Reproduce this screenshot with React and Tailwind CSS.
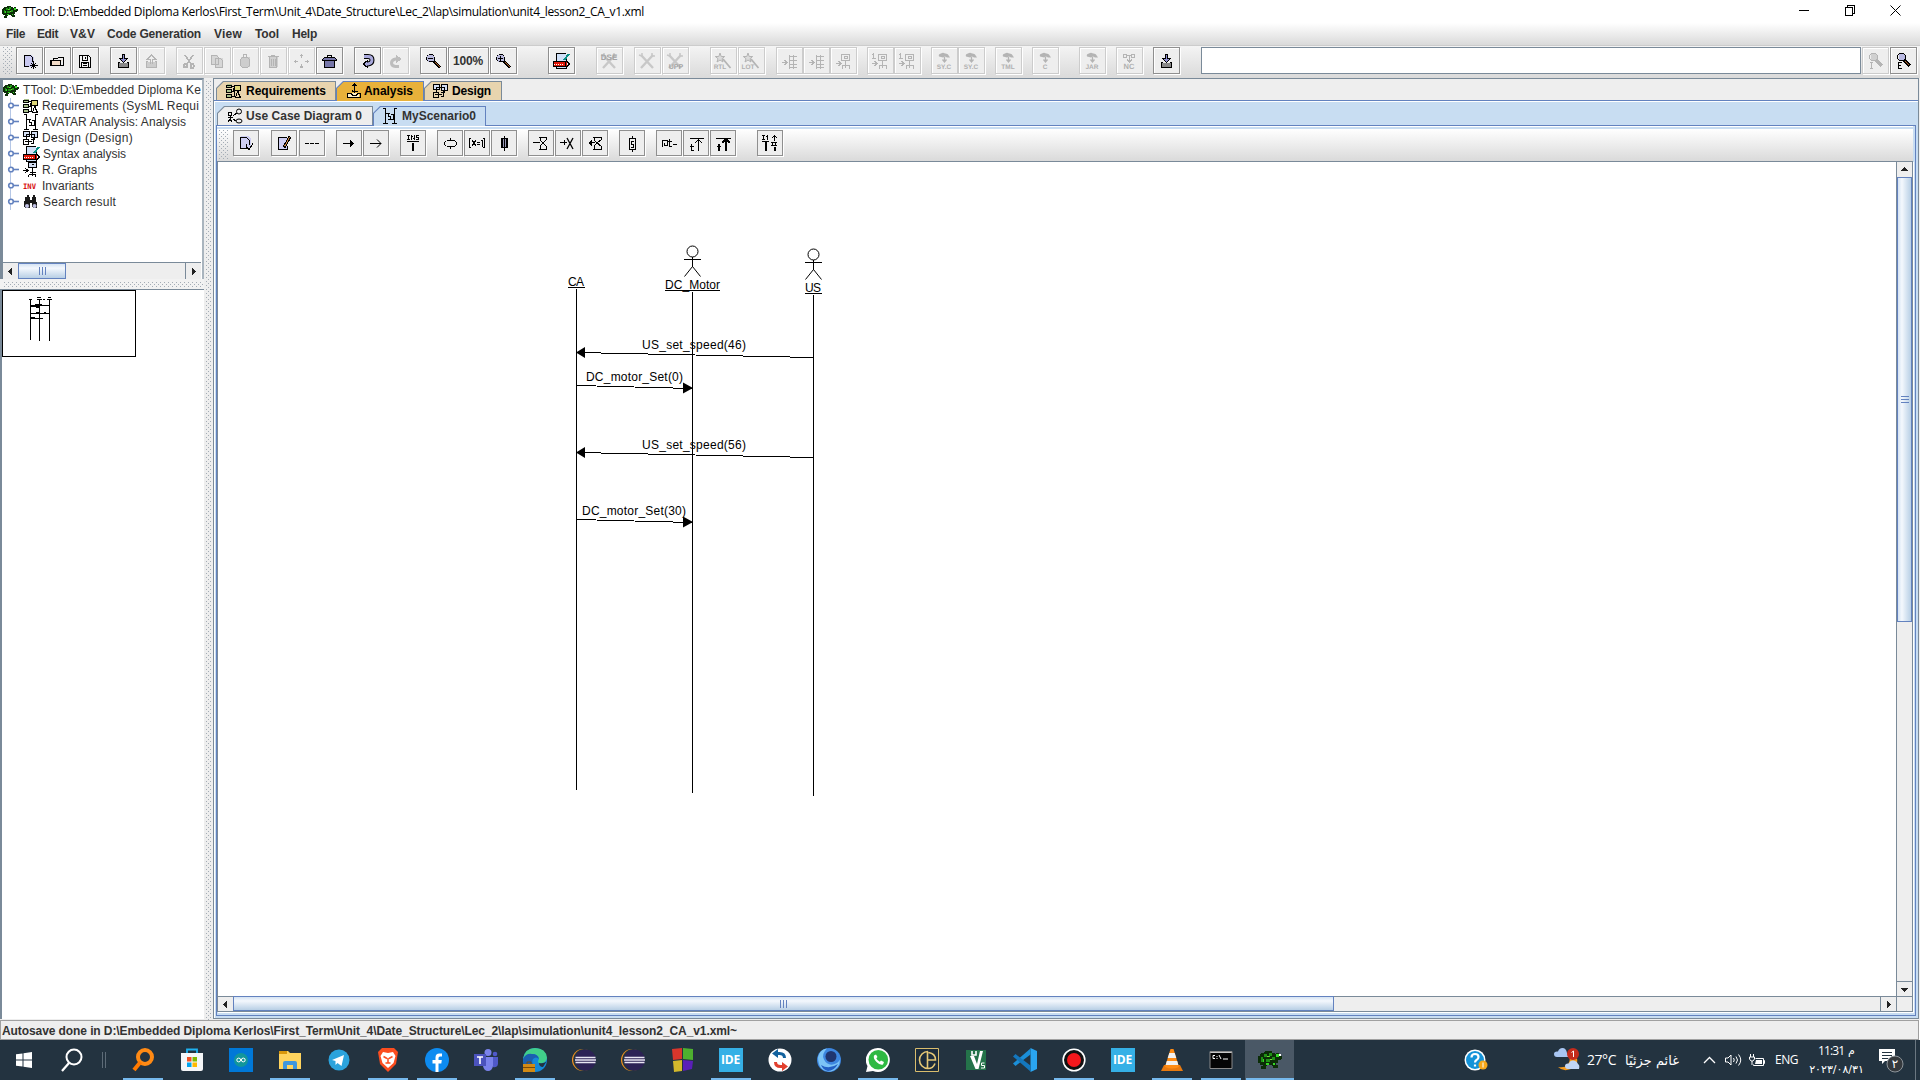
import { useLayoutEffect, useRef } from "react";

/* Text run whose tracking is adjusted so that it fills a given width. */
function Fit({ w, className = "", children, dir }) {
  const ref = useRef(null);
  useLayoutEffect(() => {
    const el = ref.current;
    el.style.letterSpacing = "0px";
    const natural = el.getBoundingClientRect().width;
    const n = String(el.textContent).length;
    el.style.letterSpacing = `${(w - natural) / n}px`;
  }, [w]);
  return (
    <span ref={ref} dir={dir} className={`inline-block whitespace-pre ${className}`}>
      {children}
    </span>
  );
}

const Svg = ({ s = 16, vb = 16, className = "", children }) => (
  <svg width={s} height={s} viewBox={`0 0 ${vb} ${vb}`} className={`shrink-0 ${className}`} fill="none">
    {children}
  </svg>
);

/* One-pixel line drawing on an 18 px grid. */
const Px = ({ d, fill, c = "#000", children, sw = 1 }) => (
  <svg width="18" height="18" viewBox="0 0 18 18" fill="none" shapeRendering="crispEdges" className="shrink-0">
    {fill && fill.map(([p, f], i) => <path key={i} d={p} fill={f} />)}
    {d && <path d={d} stroke={c} strokeWidth={sw} />}
    {children}
  </svg>
);

const Tiny = ({ x, y, children, c = "#b0b0b0", s = 7 }) => (
  <text x={x} y={y} fontSize={s} fontWeight="bold" fontFamily="Liberation Sans, sans-serif" fill={c} textAnchor="middle" textRendering="geometricPrecision">
    {children}
  </text>
);

const Turtle = ({ w = 16 }) => (
  <svg width={w} height={w * 0.75} viewBox="0 0 16 12" shapeRendering="crispEdges" className="shrink-0">
    <path d="M5 0h4v1h2v1h1v-1h2v1h1v1h1v2h-1v1h-2v2h-1v1h1v2h-3v-1h-1v-1h-3v1h-1v2h-3v-2h1v-1h-2v-1h-1v-1h-1v-3h1v-1h1v-1h1v-1h2z" fill="#0b2d07" />
    <path d="M4 2h2v2h-2zM7 1h2v2h-2zM5 5h3v2h-3zM9 4h2v2h-2zM2 4h1v3h-1z" fill="#1f9216" />
    <path d="M12 2h2v2h-2zM3 5h1v2h-1zM5 8h2v1h-2zM10 8h1v1h-1zM7 3h1v1h-1z" fill="#35d924" />
    <path d="M6 3h1v1h-1zM8 5h1v1h-1z" fill="#7bd33a" />
    <path d="M14 2h1v1h-1z" fill="#fff" />
  </svg>
);

const G = "#b4b4b4";

const Lens = ({ plus }) => (
  <Px fill={[["M4 3h5v7h-5zM3 4h7v5h-7z", "#b9b9dd"]]} d={`M4.500 2.500h4M9.500 3v1M10.500 4.500v4M9.500 9.500h-5M3.500 8.500v-1M2.500 7.500v-3M3.500 3v1M4 6.500h5${plus ? "M6.500 4v5" : ""}`}>
    <path d="M10 9.500l6 6" stroke="#000" strokeWidth="3" />
    <path d="M11.500 10.500l4.500 4.500" stroke="#b0622a" strokeWidth="1.200" />
  </Px>
);

const I = {
  new: <Px fill={[["M5 3h6l3 3v9h-9z", "#c9c9f0"]]} d="M4.500 15V3.500h6l2 2v4M5 14.500h4M13.500 9v8M10 13.500h8M11 11l5 5M16 11l-5 5" />,
  open: <Px fill={[["M4 8h10l-2 6h-9z", "#f2dcc8"]]} d="M2.500 13.500V8.500h10v5zM5.500 8V6.500h4l1-1h5v8h-2M3 13.500h11M3 9.500l1 3" />,
  save: <Px fill={[["M4 4h10v11h-10z", "#f4f4f4"]]} d="M3.500 3.500h9l2 2v10h-11zM6.500 4v4h5v-4M9.500 5v2M5.500 15v-5h7v5M7 11.500h4M7 13.500h4" />,
  imp: <Px fill={[["M5 11h9v5h-9z", "#8a8a8a"], ["M8 2h3v5h3l-4.500 4-4.500-4h3z", "#8f8fd0"]]} d="M8.500 6V2.500h2v4h3l-4 4-4-4h3M6 10.500H4.500v5h10v-5H13" />,
  exp: <Px c={G} fill={[["M5 10h9v6h-9z", "#ccc"]]} d="M6 9.500H4.500v6h10v-6H13M8.500 12V7h-3l4-4 4 4h-3v5" />,
  cut: <Px c={G} sw={1.6} d="M5 3l6 9M13 3L7 12M5 12h2v3h-3v-2zM11 12h2l1 2-1 2h-2z" />,
  copy: <Px c={G} fill={[["M4 3h6v9h-6zM8 6h7v9h-7z", "#d6d6d6"]]} d="M3.500 3.500h5l2 2v7h-7zM7.500 6.500h5l2 2v7h-7z" />,
  paste: <Px c={G} fill={[["M5 5h9v10h-9z", "#cdcdcd"]]} d="M4.500 7.500l2-2h5l2 2v6l-2 2h-5l-2-2zM7.500 5V2.500h3V5" />,
  del: <Px c={G} fill={[["M5 5h9v10h-9z", "#d0d0d0"]]} d="M3.500 4.500h11M7 3.500h4M5.500 5v10.500h7V5M7.500 7v7M9.500 7v7M11.500 7v7" />,
  move: <Px c={G} sw={1.4} d="M9.500 2v4M9.500 12v4M2 9.500h4M13 9.500h4M8 3.500h3M8 15h3M3.500 8v3M15.500 8v3" />,
  home: <Px fill={[["M3 6h13v3h-13zM5 9h9v6h-9z", "#7676a8"]]} d="M2.500 7.500l2-2h10l2 2v1h-14zM4.500 9v6.500h10V9M7.500 5V3.500h4V5" />,
  undo: (
    <Px>
      <path d="M6 4.500h4q4 0 4 3.500t-4 4l-1 0" stroke="#000" strokeWidth="5" shapeRendering="auto" />
      <path d="M10 7.500v9l-6-4.500z" fill="#000" />
      <path d="M6 4.500h4q4 0 4 3.500t-4 4l-1 0" stroke="#a9a9dc" strokeWidth="2.800" shapeRendering="auto" />
      <path d="M9 10v4.500l-3-2.500z" fill="#a9a9dc" />
    </Px>
  ),
  redo: (
    <Px>
      <path d="M13 14.500h-3.500q-4-.5-4-3.500t4-4h1" stroke="#bdbdbd" strokeWidth="3" shapeRendering="auto" />
      <path d="M10 2.500v9l5.500-4.500z" fill="#bdbdbd" />
    </Px>
  ),
  zout: <Lens />,
  zin: <Lens plus />,
  syntax: <Px fill={[["M4 2h10v14h-10z", "#cfe0f7"], ["M1 10h14v4h-14z", "#e01808"]]} d="M4.500 10V1.500h9M14.500 6v4M4.500 14v2.500h10V14M1 9.500h14l2 2v1l-2 2H1zM13.500 10v4"><path d="M17 2l-5 6" stroke="#0b8f86" strokeWidth="2" /><path d="M2 12.500h10" stroke="#fff" strokeDasharray="1 1" /></Px>,
  find: (dis, l) => (
    <Px c={dis ? G : "#000"} fill={[["M5 2h6v6h-6z", dis ? "#d0d0d0" : "#b9b9e2"]]} d="M5.500 1.500h4l2 2v3l-2 2h-4l-2-2v-3z">
      <path d="M10 8l6 6" stroke={dis ? G : "#000"} strokeWidth="3" />
      {!dis && <path d="M11 9l4 4" stroke="#b0622a" />}
      <path d={l === "I" ? "M5.500 10v6M4 10.500h3M4 16.500h3" : "M4.500 10v7M4 10.500h4M4 13.500h3M4 16.500h4"} stroke={dis ? G : "#000"} />
    </Px>
  ),
  tools: (t) => (
    <svg width="20" height="20" viewBox="0 0 20 20" fill="none" className="shrink-0">
      <path d="M4 4l12 13M16 4L4 17" stroke="#c8c8c8" strokeWidth="2.400" />
      <path d="M2 4l3 1 0-3M15 2l0 3 3 0" stroke="#c8c8c8" strokeWidth="1.500" />
      {t === "DSE" && <Tiny x={10} y={9} c="#a4a4a4" s={8}>DSE</Tiny>}
      {t === "UPP" && <Tiny x={11} y={18} c="#a4a4a4" s={7}>UPP</Tiny>}
    </svg>
  ),
  wand: (t) => (
    <svg width="20" height="20" viewBox="0 0 20 20" fill="none" className="shrink-0">
      <path d="M7 2l1.200 3.500h3.500l-2.700 2.200 1 3.300-3-2-3 2 1-3.300L2.300 5.500h3.500z" stroke={G} fill="#dcdcdc" />
      <path d="M10 8l7.500 9" stroke={G} strokeWidth="1.800" />
      <Tiny x={7} y={18} s={6.5}>{t}</Tiny>
    </svg>
  ),
  ladder: <Px c={G} sw={1.3} d="M2 10.500h5M4 8l3 2.500L4 13M9.500 3v14M13.500 3v14M9 4.500h8M9 8.500h8M9 12.500h8M9 15.500h8" />,
  rg: <Px c={G} sw={1.3} d="M7.500 2.500h8v6h-8zM10.500 4.500h3v2h-3zM11.500 9v7M2 11.500h5M4 9l3 2.500L4 14M8 13.500h8M8.500 16.500v-3M15.500 16.500v-3" />,
  rg1: <Px c={G} sw={1.3} d="M2.500 1v6M1 2.500h2M1 6.500h4M7.500 2.500h8v6h-8zM10.500 4.500h3v2h-3zM11.500 9v7M1 11.500h5M3 9l3 2.500L3 14M8 13.500h8M8.500 16.500v-3M15.500 16.500v-3" />,
  cloud: (t) => (
    <svg width="20" height="20" viewBox="0 0 20 20" fill="none" className="shrink-0">
      <path d="M5 5.500q-1-2.500 2-3q2-1.500 4 0q3-.5 4 2.500l1 1.500h-3l-2-1-2 1z" fill={G} />
      <path d="M10.500 6v5M8.500 8.500l2 2.500 2-2.500" stroke={G} strokeWidth="1.300" />
      <Tiny x={10} y={18} s={6.5}>{t}</Tiny>
    </svg>
  ),
  nc: (
    <svg width="20" height="20" viewBox="0 0 20 20" fill="none" className="shrink-0" shapeRendering="crispEdges">
      <path d="M4.500 3.500h3v3h-3zM12.500 3.500h3v3h-3zM8 4.500h4M10.500 5v6M8 8.500l2.500 2.500L13 8.500" stroke={G} />
      <Tiny x={10} y={18} s={7.5}>NC</Tiny>
    </svg>
  ),
};

const bar = [
  ["new", I.new, "ml-[3px]"], ["open", I.open, "ml-px"], ["save", I.save, "ml-px"],
  ["import", I.imp, "ml-[11px]"], ["export", I.exp, "ml-px", 1],
  ["cut", I.cut, "ml-[11px]", 1], ["copy", I.copy, "ml-px", 1], ["paste", I.paste, "ml-px", 1], ["delete", I.del, "ml-px", 1], ["move", I.move, "ml-px", 1], ["home", I.home, "ml-px"],
  ["undo", I.undo, "ml-[11px]"], ["redo", I.redo, "ml-px", 1],
  ["zoomout", I.zout, "ml-[11px]"], ["zoom", "100%", "ml-px"], ["zoomin", I.zin, "ml-px"],
  ["syntax", I.syntax, "ml-[31px]"],
  ["dse", I.tools("DSE"), "ml-[21px]", 1],
  ["t1", I.tools(""), "ml-[11px]", 1], ["upp", I.tools("UPP"), "ml-px", 1],
  ["rtl", I.wand("RTL"), "ml-[21px]", 1], ["lot", I.wand("LOT"), "ml-px", 1],
  ["l1", I.ladder, "ml-[11px]", 1], ["l2", I.ladder, "ml-0", 1], ["rg", I.rg, "ml-0", 1],
  ["r1", I.rg1, "ml-[10px]", 1], ["r2", I.rg1, "ml-0", 1],
  ["c1", I.cloud("SY.C"), "ml-[10px]", 1], ["c2", I.cloud("SY.C"), "ml-0", 1],
  ["tml", I.cloud("TML"), "ml-[10px]", 1], ["c", I.cloud("C"), "ml-[10px]", 1],
  ["jar", I.cloud("JAR"), "ml-[20px]", 1], ["nc", I.nc, "ml-[10px]", 1],
  ["imp2", I.imp, "ml-[10px]"],
];

const Btn = ({ cls, dis, children }) => (
  <div className={`${cls} flex h-[27px] shrink-0 items-center justify-center border pt-px pr-px ${dis ? "border-[#cccccc]" : "border-[#8f8f8f]"} bg-[#eeeeee] shadow-[1px_1px_0_#fff,inset_1px_1px_0_#fff]`}>
    {children}
  </div>
);

const bumps =
  "[background:conic-gradient(from_270deg_at_1px_1px,#a4acb5_90deg,transparent_0)_0_0/4px_4px,conic-gradient(from_270deg_at_1px_1px,#a4acb5_90deg,transparent_0)_2px_2px/4px_4px]";

/* Diagram-type icons shared by the tree and the tabs. */
const ReqIcon = () => (
  <Px fill={[["M2 2h5v3h-5zM2 7h5v3h-5zM2 12h5v3h-5z", "#a9c08c"], ["M10 3h5v6h-5z", "#ddd679"]]} d="M1.500 3.500h5v2h-5zM1.500 7.500h5v3h-5zM1.500 12.500h5v3h-5zM9.500 3.500h6v5h-6zM7 4.500h2M7 9.500h2v5h-2M8.500 6v3M10.500 15.500l2-6 3 6zM13 9v2" />
);
const SeqIcon = () => (
  <Px d="M2 1.500h3M13 1.500h3M4.500 2v15M13.500 2v15M2 16.500h5M11 16.500h5M5 6.500h4M9 12.500h4M7.500 6v3h2v3M7 12.500h2M10 7.500h2v4" />
);
const DesIcon = () => (
  <Px fill={[["M2 3h6v5h-6zM10 3h6v5h-6z", "#d3def3"]]} d="M1.500 2.500h6v5h-6zM9.500 2.500h6v6h-6zM1.500 10.500h5v5h-5zM4.500 5v6M5 5.500h7v5h-3M11.500 8v6M3 12.500h7M9 14.500h3" />
);
const AnaIcon = () => (
  <Px fill={[["M3 11h11v4h-11z", "#fff0c4"]]} d="M9.500 1v10M7 3.500h5M8 2.500h3M6.500 9.500h6M7.500 8v2M2.500 15.500v-4h4l1 2h4l1-2h3v4z" />
);
const UcIcon = () => (
  <Px d="M3.500 5.500h3v3h-3zM5.500 9v3M3 10.500h5M3 15l2-3 2 3M8 9l4-3M8 12l3 2"><circle cx="14" cy="4.500" r="2.500" stroke="#000" shapeRendering="auto" /><ellipse cx="14" cy="14" rx="3" ry="2" stroke="#000" shapeRendering="auto" /></Px>
);

const Tab = ({ w, border, bg, icon, text, tw, cls = "", color, pad = "pl-[7px]", gap = "ml-[3px]" }) => (
  <div className={`${w} ${border} ${cls} shrink-0 [clip-path:polygon(7px_0,100%_0,100%_100%,0_100%,0_7px)] pt-px pr-px pl-px`}>
    <div className={`${bg} ${color} ${pad} flex h-[18px] items-center [clip-path:polygon(6.600px_0,100%_0,100%_100%,0_100%,0_6.600px)]`}>
      {icon}
      <Fit w={tw} className={`${gap} text-[12px] leading-none font-bold`}>{text}</Fit>
    </div>
    <div className={`${bg} h-[4px]`} />
  </div>
);

const diag = [
  ["ml-[4px]", <Px key="i" fill={[["M4 2h7l3 3v9h-10z", "#cdcdf2"]]} d="M3.500 3.500h6l3 3v4M3.500 3v11.500h6M9 12.500l3 3 4-6M9.500 10v3" />],
  ["ml-[12px]", <Px key="i" fill={[["M3 3h9v12h-9z", "#cdcdf2"]]} d="M3.500 3.500h8M3.500 3v12.500h9v-4"><path d="M15 2.500l-6 11" stroke="#000" strokeWidth="3" /><path d="M14.500 3.500l-5 9" stroke="#c98544" /></Px>],
  ["ml-[2px]", <Px key="i" d="M2 9.500h4M7 9.500h4M12 9.500h4" />],
  ["ml-[11px]", <Px key="i" fill={[["M10 6h1v1h1v1h1v1h1v1h-1v1h-1v1h-1v1h-1z", "#000"]]} d="M3 9.500h10" />],
  ["ml-[1px]", <Px key="i" d="M3 9.500h11" ><path d="M10 5.500l4 4-4 4" stroke="#000" shapeRendering="auto" /></Px>],
  ["ml-[11px]", <Px key="i" fill={[["M8 9h2v8h-2z", "#000"], ["M3 7h12v1h-12z", "#000"]]} d="M3 1.500h3M3 5.500h3M4.500 1v4M7.500 1v5M10.500 1v5M8 2.500h1M9 4h1M15 1.500h-2.500v2h2v2h-3" />],
  ["ml-[11px]", <Px key="i" d="M5.500 6.500h8M5.500 12.500h8M3.500 8v3M15.500 8v3M4 7.500h1M14 7.500h1M4 11.500h1M14 11.500h1M9.500 4v2M9.500 13v2" />],
  ["ml-[1px]", <Px key="i" d="M3 4.500H1.500v9H3M15 4.500h1.500v9H15M4 6l4 6M8 6l-4 6M9 8.500h3M9 10.500h3M13 6.500h1.500v6" />],
  ["ml-[1px]", <Px key="i" fill={[["M7 5h5v9h-5z", "#9a9ab8"]]} d="M9.500 2v15M7 4.500h5v9h-5z" sw={1.5} />],
  ["ml-[11px]", <Px key="i" d="M1 8.500h7M7 3.500h8M8 4v2l3 3-3 3v3M14 4v2l-3 3 3 3v3M7 15.500h8" />],
  ["ml-[1px]", <Px key="i" d="M1 8.500h7M5 6v5"><path d="M8 4l6 11M14 4L8 15" stroke="#000" strokeWidth="1.300" shapeRendering="auto" /></Px>],
  ["ml-[1px]", <Px key="i" fill={[["M6 5v8l-4-4z", "#000"]]} d="M4 8.500h5M7 3.500h9M8 4v2l3 3-3 3v3M15 4v2l-4 3 4 3v3M7 15.500h9" />],
  ["ml-[11px]", <Px key="i" d="M6.500 4.500h6v11h-6zM9.500 2v2M9.500 16v2M8 7.500h3M8 10.500h3M8 13.500h3M8.500 7v3M10.500 10v3" />],
  ["ml-[11px]", <Px key="i" d="M2.500 13V6.500h5v5h-3v-3M9.500 5v7h2M8 7.500h4M13 10.500h4" />],
  ["ml-[1px]", <Px key="i" d="M3 4.500h14M11.500 5v12M11.500 5.500l-4 4M11.500 5.500l4 4M4.500 10v6h2M3 12.500h4" />],
  ["ml-[1px]", <Px key="i" fill={[["M2 4h15v1h-15zM11 5h2v12h-2zM4 10h2v7h-2zM3 12h4v1h-4z", "#000"]]} d="M12 5l-4 4M12 5l4 4" sw={1.6} />],
  ["ml-[21px]", <Px key="i" fill={[["M4 8h2v9h-2z", "#000"], ["M13 13h2v4h-2z", "#000"]]} d="M1 1.500h3M1 5.500h3M2.500 1v4M6.500 1v5M5 2.500h1M1 7.500h7M13.500 1v6M11 4l2.500-2.500L16 4M10 8.500h6M10 11.500h6M11.500 8v3M14.500 8v3" />],
];

const Arrow = ({ dir }) => (
  <svg width="9" height="9" viewBox="0 0 9 9" shapeRendering="crispEdges">
    <path fill="#222" d={{ l: "M6 0v9L2 4.500z", r: "M3 0v9l4-4.500z", u: "M0 6h9L4.500 2z", d: "M0 3h9L4.500 7z" }[dir]} />
  </svg>
);

const Knob = () => (
  <svg width="16" height="16" viewBox="0 0 16 16" className="shrink-0" fill="none">
    <path d="M7.500 0v16" stroke="#b5c7e6" />
    <circle cx="8" cy="7.500" r="2.300" fill="#fff" stroke="#6382bf" strokeWidth="1.600" />
    <path d="M10.500 7.500h5.500" stroke="#6382bf" strokeWidth="1.600" />
  </svg>
);

const tree = [
  [<ReqIcon key="i" />, "Requirements (SysML Requi", 157, "ml-0"],
  [<SeqIcon key="i" />, "AVATAR Analysis: Analysis", 144, "ml-0"],
  [<DesIcon key="i" />, "Design (Design)", 91, "ml-0"],
  [I.syntax, "Syntax analysis", 83, "ml-px"],
  [<Px key="i" fill={[["M7 2h8v4h-8z", "#d3def3"]]} d="M6.500 1.500h8v5h-8zM9.500 3.500h2M10.500 7v8M1 9.500h5M3 7l3 2.500L3 12M7 13.500h7M6.500 16v-2M13.500 16v-2M8 11.500h6" />, "R. Graphs", 55, "ml-0"],
  [<svg key="i" width="18" height="16" viewBox="0 0 18 16"><text x="1" y="10.500" fontSize="7.500" fontWeight="bold" textLength="13" lengthAdjust="spacingAndGlyphs" fontFamily="DejaVu Sans Mono, monospace" fill="#d81010">INV</text></svg>, "Invariants", 52, "ml-0"],
  [
    <Px key="i" fill={[["M5 2h2v2h1v3h2v-3h1v-2h2v2h1v3l1 3v4l-1 1h-3l-1-1v-4h-2v4l-1 1h-4l-1-1v-4l1-3v-3h2z", "#1a1a1a"]]}>
      <circle cx="5" cy="13" r="2" fill="#c3c3e6" shapeRendering="auto" />
      <circle cx="12.500" cy="13" r="2" fill="#c3c3e6" shapeRendering="auto" />
    </Px>,
    "Search result", 73, "ml-px",
  ],
];

const Person = ({ x, y }) => (
  <g stroke="#000" fill="none">
    <circle cx={x + 0.5} cy={y} r="5.500" />
    <path shapeRendering="crispEdges" d={`M${x + 0.5} ${y + 5}v10M${x - 8} ${y + 8}h17`} />
    <path d={`M${x + 0.5} ${y + 15}l-8 10M${x + 0.5} ${y + 15}l8 10`} />
  </g>
);

/* Sequence diagram; the view box starts at the top-left of the drawing area. */
const Diagram = () => {
  const T = (x, y, w, t) => (
    <text x={x} y={y} textLength={w} fontSize="12" fontFamily="Liberation Sans, sans-serif" fill="#000">{t}</text>
  );
  return (
    <svg width="700" height="680" viewBox="218 162 700 680" className="block">
      <Person x={692} y={251.5} />
      <Person x={813} y={254.5} />
      {T(568, 286, 16, "CA")}
      {T(665, 289, 55, "DC_Motor")}
      {T(805, 292, 16, "US")}
      {T(642, 349, 104, "US_set_speed(46)")}
      {T(586, 381, 97, "DC_motor_Set(0)")}
      {T(642, 449, 104, "US_set_speed(56)")}
      {T(582, 515, 104, "DC_motor_Set(30)")}
      <g stroke="#000" shapeRendering="crispEdges">
        <path d="M568 287.500h17M665 290.500h55M805 293.500h17" />
        <path d="M576.500 289v501M692.500 292v501M813.500 295v501" />
        <path d="M577 352.500L813 357.500M577 385.500L692 388.500M577 452.500L813 457.500M577 519.500L692 522.500" />
      </g>
      <path d="M576 352.500l9-5.500v11zM693 388l-10-5.500v11zM576 452.500l9-5.500v11zM693 522l-10-5.500v11z" fill="#000" />
    </svg>
  );
};

const thumbH = "bg-linear-to-b from-[#d5e3f3] via-[#f4f8fd] via-30% to-[#b8cfe5]";
const thumbV = "bg-linear-to-r from-[#d5e3f3] via-[#f4f8fd] via-30% to-[#b8cfe5]";

const Eclipse = () => (
  <Svg s={24} vb={24}>
    <circle cx="11" cy="12" r="11" fill="#f7941e" />
    <circle cx="12.200" cy="12" r="11" fill="#233340" />
    <circle cx="13.500" cy="12" r="10.500" fill="#2c2255" />
    <path d="M3.500 9.500h20M3 12h21M3.500 14.500h20" stroke="#e8e6f2" strokeWidth="1.500" />
  </Svg>
);
const Ide = () => (
  <div className="flex size-6 items-center justify-center bg-[#35b0e6] text-white"><Fit w={19} className="font-['Open_Sans',sans-serif] text-[12px] font-bold">IDE</Fit></div>
);

const tasks = [
  ["everything", <Svg key="i" s={24} vb={24}><circle cx="14" cy="9" r="7" stroke="#ff8a14" strokeWidth="4" /><path d="M9.500 14L3 22" stroke="#ff7a00" strokeWidth="4" /></Svg>, 1],
  ["store", <Svg key="i" s={24} vb={24}><path d="M7 6V1.500h10V6" stroke="#1fb2f0" strokeWidth="1.800" /><path d="M1 5h22v16q0 2-2 2H3q-2 0-2-2z" fill="#f4f6f8" /><path d="M7 9h4.500v4.500H7z" fill="#f25022" /><path d="M12.500 9H17v4.500h-4.500z" fill="#7fba00" /><path d="M7 14.500h4.500V19H7z" fill="#00a4ef" /><path d="M12.500 14.500H17V19h-4.500z" fill="#ffb900" /></Svg>],
  ["arduino", <Svg key="i" s={24} vb={24}><path d="M0 0h24v24H0z" fill="#0078d7" /><circle cx="12" cy="12" r="7" fill="#12969b" /><circle cx="9.700" cy="12" r="1.900" stroke="#fff" /><circle cx="14.300" cy="12" r="1.900" stroke="#fff" /></Svg>],
  ["files", <Svg key="i" s={24} vb={24}><path d="M1 3h9l2 2h11v16H1z" fill="#ffd45e" /><path d="M1 3h8v3H1z" fill="#d9980c" /><path d="M5 21v-6q0-2 2-2h10q2 0 2 2v6h-4v-4H9v4z" fill="#3f97dd" /></Svg>, 1],
  ["telegram", <Svg key="i" s={24} vb={24}><circle cx="12" cy="12" r="10.500" fill="#2ba3dc" /><path d="M5 12l12-5-2.500 11-4-3-2 2v-4z" fill="#fff" /></Svg>],
  ["brave", <Svg key="i" s={24} vb={24}><path d="M6 0h12l4 4-2 12-8 8-8-8L2 4z" fill="#fb4d1f" /><path d="M7 4l5 1 5-1 2.500 4-2 7-5.500 5-5.500-5-2-7z" fill="#fff" /><path d="M7.500 8.500l3.500 2M16.500 8.500l-3.500 2M12 10v5M9.500 15h5" stroke="#fb4d1f" strokeWidth="1.500" /></Svg>, 1],
  ["facebook", <Svg key="i" s={24} vb={24}><circle cx="12" cy="12" r="12" fill="#0d8bf0" /><path d="M10.500 24v-8.500H7.500V12h3V9.500q0-4 4-4h2.500v3h-2q-1.500 0-1.500 1.500v2h3.300l-.5 3.500H13.500V24z" fill="#fff" /></Svg>, 1],
  ["teams", <Svg key="i" s={24} vb={24}><circle cx="14" cy="4.500" r="3.500" fill="#7b83eb" /><circle cx="21" cy="6" r="2.300" fill="#5059c9" /><path d="M9 9h10v9q-1 5-5 5t-5-5z" fill="#7b83eb" /><path d="M19 9h5v7q-1 4-5 3z" fill="#5059c9" /><path d="M0 6h12v12H0z" fill="#4b53bc" /><path d="M3 9h6M6 9v7" stroke="#fff" strokeWidth="1.600" /></Svg>],
  ["edge", <Svg key="i" s={24} vb={24}><circle cx="12" cy="12" r="12" fill="#1689d8" /><path d="M0 11Q2 0 12 0q11 0 12 10-1 6-8 5-2-1 0-4-1-5-7-5-6 0-9 5z" fill="#41cf8a" /><path d="M0 11q3-6 9-5 6 0 7 5-3-3-6 0-2 3 1 8L3 20q-3-4-3-9z" fill="#1b5fb0" /><path d="M16 15q5 1 7.500-1.500L20 19q-4 0-4-4z" fill="#233340" /><path d="M0 16h12v8H0z" fill="#d28a14" /><path d="M0 19.500h12M4 16v-2h4v2" stroke="#7a4a08" /></Svg>, 1],
  ["ecl1", <Eclipse key="i" />],
  ["ecl2", <Eclipse key="i" />],
  ["blocks", <Svg key="i" s={24} vb={24}><path d="M2 1l10-1v11l-9 1z" fill="#d8362c" /><path d="M13 0l10 1v11l-10-1z" fill="#4db02f" /><path d="M3 13l9-1v11l-8 1z" fill="#d3b92c" /><path d="M13 12l10 1-1 8-9 2z" fill="#5a1fb8" /></Svg>],
  ["ide1", <Ide key="i" />, 1],
  ["sync", <Svg key="i" s={24} vb={24}><circle cx="12" cy="12" r="11.500" fill="#fff" /><path d="M16.500 10q0-4.500-5-4.500H9" stroke="#12629e" strokeWidth="3" /><path d="M10 1v9L4 5.500z" fill="#12629e" /><path d="M7.500 14q0 4.500 5 4.500H15" stroke="#e2402e" strokeWidth="3" /><path d="M14 14v9l6-4.500z" fill="#e2402e" /></Svg>],
  ["wave", <Svg key="i" s={24} vb={24}><circle cx="12" cy="12" r="12" fill="#3d86e0" /><path d="M1 9Q3 1 10 0.500q-6 6-3 11 3 6 9 5 5-1 7-5 0 9-9 12Q1 24 1 9z" fill="#7cc4f6" /><path d="M4 17q8 5 17-1-4 7-10 7-5-1-7-6z" fill="#2360c4" /><circle cx="14" cy="8.500" r="5.500" fill="#20356f" /></Svg>],
  ["whatsapp", <Svg key="i" s={24} vb={24}><path d="M12 0a12 12 0 1 1-5 23L0 24l1.500-6A12 12 0 0 1 12 0z" fill="#fff" /><circle cx="12.300" cy="11.800" r="9.800" fill="#2fb943" /><path d="M8 7.500q-1 3 2.500 6.500t6.500 2.500l1-2.500-3-1.500-1.200 1.200q-2.500-1-3.500-3.500L11.500 9 10 6.500z" fill="#fff" /></Svg>, 1],
  ["ce", <Svg key="i" s={24} vb={24}><path d="M.5.500h23v23H.5z" stroke="#d9bd6d" fill="#1c2c3a" /><path d="M13 3.500a8.500 8.500 0 1 0 0 17M12.500 3.500v17M12.500 12h8q0-6.500-7-7.500M20 15.500q-2 5-7 5" stroke="#e5c876" strokeWidth="1.600" /></Svg>],
  ["keil", <Svg key="i" s={24} vb={24}><path d="M2 2h20v20H2z" fill="#24734a" /><path d="M8 3v4h4V3" stroke="#fff" strokeWidth="1.600" /><path d="M6 8h4l3 8 3-13h3l-4.500 18h-3z" fill="#fff" /><path d="M20.500 15h-3v2.500h3V20h-3.500" stroke="#fff" /></Svg>],
  ["vscode", <Svg key="i" s={24} vb={24}><path d="M17.500 0L24 3v18l-6.500 3z" fill="#2aa5f0" /><path d="M17.500 6.500v-6L0 15.500 2.500 18z" fill="#1b8fd8" /><path d="M17.500 17.500v6L0 8.500 2.500 6z" fill="#1477bd" /></Svg>],
  ["rec", <Svg key="i" s={24} vb={24}><circle cx="12" cy="12" r="10.800" fill="#111" stroke="#fff" strokeWidth="1.600" /><circle cx="12" cy="12" r="7" fill="#f5181c" /></Svg>, 1],
  ["ide2", <Ide key="i" />],
  ["vlc", <Svg key="i" s={24} vb={24}><path d="M4 17h16l3 6H1z" fill="#e87a10" /><path d="M10.500 1h3L19 19q-7 3-14 0z" fill="#ff8c14" /><path d="M9.300 5h5.400l1.600 5H7.700zM6.800 13h10.400l1.200 4H5.600z" fill="#f1f1f1" /></Svg>, 1],
  ["cmd", <Svg key="i" s={24} vb={24}><path d="M1 3h22v18H1z" fill="#050505" /><path d="M1 3h22v2H1z" fill="#c8c8c8" /><path d="M1 3.500h22v17H1z" stroke="#8a8a8a" /><path d="M6 7.500H4v3h2M8 8v1M8 10v1M10 7l2 4M14 11h5" stroke="#fff" /></Svg>, 1],
  ["ttool", <Turtle key="i" w={24} />, 2],
];

export default function App() {
  return (
    <div className="flex h-[1080px] w-[1920px] flex-col overflow-hidden bg-white font-['Liberation_Sans',Arial,sans-serif] text-[12px] text-[#333]">
      {/* Title bar */}
      <div className="flex h-[23px] shrink-0 items-center pl-[2px] text-black">
        <Turtle />
        <Fit w={621} className="ml-[5px] font-['Open_Sans','Noto_Sans',sans-serif] text-[12px] leading-none">
          {"TTool: D:\\Embedded Diploma Kerlos\\First_Term\\Unit_4\\Date_Structure\\Lec_2\\lap\\simulation\\unit4_lesson2_CA_v1.xml"}
        </Fit>
        <div className="ml-auto flex w-[121px] items-center justify-between pr-[19px] pb-[3px]">
          <svg width="11" height="11" shapeRendering="crispEdges"><path d="M0 5.500h10" stroke="#000" /></svg>
          <svg width="11" height="11" fill="none" shapeRendering="crispEdges"><path d="M.5 2.500h7v8h-7zM2.500 2V.5h7v8H8" stroke="#000" /></svg>
          <svg width="11" height="11"><path d="M.5.500l10 10M10.500.500l-10 10" stroke="#000" /></svg>
        </div>
      </div>
      {/* Menu bar */}
      <div className="flex h-[22px] shrink-0 items-center bg-linear-to-b from-white to-[#dadada] pl-[6px] font-bold leading-none">
        <Fit w={19}>File</Fit>
        <Fit w={21} className="ml-[12px]">Edit</Fit>
        <Fit w={25} className="ml-[12px]">{"V&V"}</Fit>
        <Fit w={94} className="ml-[12px]">Code Generation</Fit>
        <Fit w={28} className="ml-[13px]">View</Fit>
        <Fit w={24} className="ml-[13px]">Tool</Fit>
        <Fit w={25} className="ml-[13px]">Help</Fit>
      </div>
      {/* Main toolbar */}
      <div className="flex h-[33px] shrink-0 border-t border-[#cccccc] bg-linear-to-b from-[#f4f4f4] to-[#dadada] pt-px">
        <div className={`ml-[3px] h-[28px] w-[10px] ${bumps}`} />
        {bar.map(([k, icon, ml, dis]) => (
          <Btn key={k} dis={dis} cls={`${ml} ${k === "zoom" ? "w-[41px]" : "w-[27px]"}`}>
            {k === "zoom" ? <Fit w={30} className="font-bold">100%</Fit> : icon}
          </Btn>
        ))}
        <div className="ml-[21px] h-[27px] w-[660px] border border-[#7a8a99] bg-white" />
        <Btn dis cls="ml-px w-[27px]">{I.find(true, "I")}</Btn>
        <Btn cls="ml-px w-[27px]">{I.find(false, "E")}</Btn>
      </div>

      {/* Work area */}
      <div className="flex h-[942px] shrink-0 bg-[#eeeeee]">
        {/* Left column */}
        <div className="flex w-[204px] shrink-0 flex-col">
          <div className="h-[201px] overflow-hidden border-t-2 border-r-2 border-l-[3px] border-[#7a8a99] border-r-[#a9b4be] bg-white">
            <div className="flex h-[183px] w-[198px] flex-col border-b border-[#7a8a99] pt-[2px] leading-none">
              <div className="flex h-[16px] items-center">
                <Turtle />
                <Fit w={178} className="ml-[4px]">{"TTool: D:\\Embedded Diploma Ke"}</Fit>
              </div>
              {tree.map(([icon, t, w, ml]) => (
                <div key={t} className="flex h-[16px] items-center">
                  <Knob />
                  <div className="ml-[3px] flex w-[20px] shrink-0">{icon}</div>
                  <Fit w={w} className={ml}>{t}</Fit>
                </div>
              ))}
            </div>
            <div className="flex h-[16px] w-[198px] bg-[#eeeeee]">
              <div className="flex w-[15px] items-center justify-center"><Arrow dir="l" /></div>
              <div className={`${thumbH} flex w-[48px] items-center justify-center gap-[2px] border border-[#6382bf]`}>
                <i className="h-[8px] w-px bg-[#6382bf]" /><i className="h-[8px] w-px bg-[#6382bf]" /><i className="h-[8px] w-px bg-[#6382bf]" />
              </div>
              <div className="ml-auto flex w-[16px] items-center justify-center border-l border-[#7a8a99] pr-px"><Arrow dir="r" /></div>
            </div>
          </div>
          <div className="flex h-[10px] items-center bg-[#f2f2f2] pl-[4px]"><div className={`h-[5px] w-full ${bumps}`} /></div>
          <div className="h-[730px] border-t border-l-2 border-[#7a8a99] bg-white">
            <div className="h-[67px] w-[134px] border border-black">
              <svg width="132" height="65" viewBox="3 291 132 65" shapeRendering="crispEdges" fill="none" stroke="#000">
                <path d="M30.500 299v41M39.500 300v41M49.500 300v41M30 305.500h20M31 313.500h19M31 318.500h8" />
                <path d="M29 299.500h3M37 299.500h5M47 299.500h5M48 297.500h3M37 297.500h4M43 299.500h2M31 306.500h8M35 304.500h7M36 307.500h4M31 317.500h4M39 318.500h4M36 312.500h4M44 312.500h2" />
              </svg>
            </div>
          </div>
        </div>
        {/* Split divider */}
        <div className="flex w-[9px] shrink-0 justify-center pt-[3px]"><div className={`h-full w-[5px] ${bumps}`} /></div>
        {/* Right column */}
        <div className="mb-px flex w-[1706px] shrink-0 flex-col border border-[#7a8a99]">
          <div className="flex h-[22px] shrink-0 border-b border-[#6382bf] pt-[2px] pl-[2px]">
            <Tab w="w-[120px]" border="bg-[#7a8a99]" bg="bg-[#e8d4ae]" color="text-black" icon={<ReqIcon />} text="Requirements" tw={80} pad="pl-[8px]" />
            <Tab w="w-[88px]" border="bg-[#6382bf]" bg="bg-[#e8b13a]" color="text-black" cls="h-[20px]" icon={<AnaIcon />} text="Analysis" tw={49} pad="pl-[8px]" gap="ml-px" />
            <Tab w="w-[78px]" border="bg-[#7a8a99]" bg="bg-[#e8d4ae]" color="text-black" icon={<DesIcon />} text="Design" tw={39} gap="ml-[2px]" />
          </div>
          <div className="flex min-h-0 grow flex-col border-t border-l border-white bg-[#c8ddf2] pt-[4px] pr-[2px] pb-[2px] pl-px">
            <div className="flex h-[20px] shrink-0 border-b border-[#6382bf] pl-[1px]">
              <Tab w="w-[156px]" border="bg-[#7a8a99]" bg="bg-[#eeeeee]" color="text-[#333]" icon={<UcIcon />} text="Use Case Diagram 0" tw={116} />
              <Tab w="w-[113px]" border="bg-[#6382bf]" bg="bg-[#c8ddf2]" color="text-[#333]" cls="h-[20px]" icon={<SeqIcon />} text="MyScenario0" tw={74} />
            </div>
            <div className="flex min-h-0 grow flex-col border-r border-b border-l border-[#6382bf] pr-[2px] pb-[3px]">
              <div className="h-px shrink-0 bg-white" />
              <div className="h-[2px] shrink-0" />
              <div className="flex h-[32px] shrink-0 bg-linear-to-b from-white to-[#dadada] pt-px">
                <div className={`ml-[2px] h-[29px] w-[10px] shrink-0 ${bumps}`} />
                {diag.map(([ml, icon], i) => (
                  <div key={i} className={`${ml} flex size-[26px] shrink-0 items-center justify-center border border-[#8f8f8f] bg-[#eeeeee] shadow-[1px_1px_0_#fff]`}>{icon}</div>
                ))}
              </div>
              <div className="flex min-h-0 grow flex-col border border-[#7a8a99] bg-white shadow-[1px_1px_0_#fff]">
                <div className="flex min-h-0 grow">
                  <div className="min-h-0 grow overflow-hidden bg-white"><Diagram /></div>
                  <div className="flex w-[16px] shrink-0 flex-col border-l border-[#7a8a99] bg-[#eeeeee]">
                    <div className="flex h-[15px] shrink-0 items-center justify-center"><Arrow dir="u" /></div>
                    <div className={`${thumbV} flex h-[445px] flex-col items-center justify-center gap-[2px] border border-[#6382bf]`}>
                      <i className="h-px w-[8px] bg-[#6382bf]" /><i className="h-px w-[8px] bg-[#6382bf]" /><i className="h-px w-[8px] bg-[#6382bf]" />
                    </div>
                    <div className="mt-auto flex h-[15px] items-center justify-center border-t border-[#7a8a99]"><Arrow dir="d" /></div>
                  </div>
                </div>
                <div className="flex h-[15px] shrink-0 border-t border-[#7a8a99] bg-[#eeeeee]">
                  <div className="flex w-[15px] items-center justify-center"><Arrow dir="l" /></div>
                  <div className={`${thumbH} -mt-px flex w-[1101px] items-center justify-center gap-[2px] border border-[#6382bf]`}>
                    <i className="h-[8px] w-px bg-[#6382bf]" /><i className="h-[8px] w-px bg-[#6382bf]" /><i className="h-[8px] w-px bg-[#6382bf]" />
                  </div>
                  <div className="ml-auto flex w-[16px] items-center justify-center border-l border-[#7a8a99]"><Arrow dir="r" /></div>
                  <div className="w-[16px] border-l border-[#7a8a99]" />
                </div>
              </div>
            </div>
          </div>
        </div>
      </div>

      {/* Status line */}
      <div className="flex h-[20px] w-[1919px] shrink-0 items-center border border-[#a0a0a0] bg-[#eeeeee] pt-[2px] pl-px font-bold leading-none">
        <Fit w={735}>{"Autosave done in D:\\Embedded Diploma Kerlos\\First_Term\\Unit_4\\Date_Structure\\Lec_2\\lap\\simulation\\unit4_lesson2_CA_v1.xml~"}</Fit>
      </div>

      {/* Taskbar */}
      <div className="flex h-[40px] shrink-0 bg-[#233340] font-['Open_Sans','Noto_Sans',sans-serif] text-white">
        <div className="flex w-[48px] items-center justify-center">
          <svg width="16" height="16" fill="#fff"><path d="M0 2.300l6.500-.9v6.100H0zM7.500 1.200L16 0v7.500H7.500zM0 8.500h6.500v6.100L0 13.700zM7.500 8.500H16V16l-8.500-1.200z" /></svg>
        </div>
        <div className="flex w-[48px] items-center justify-center">
          <Svg s={24} vb={24}><circle cx="14" cy="9" r="7.500" stroke="#fff" strokeWidth="2" /><path d="M9 15L2 23" stroke="#fff" strokeWidth="2.200" /></Svg>
        </div>
        <div className="flex w-[22px] items-center pl-[6px]"><div className="h-[16px] w-[4px] border-x border-[#5d6b77]" /></div>
        {tasks.map(([k, icon, on]) => (
          <div key={k} className={`flex h-[40px] w-[49px] shrink-0 flex-col items-center ${on === 2 ? "bg-[#4a5866]" : ""}`}>
            <div className="flex h-[38px] shrink-0 items-center pt-[2px]">{icon}</div>
            {on && <div className={`h-[2px] bg-[#76b9ed] ${on === 2 ? "w-[48px]" : "w-[40px]"}`} />}
          </div>
        ))}
        <div className="ml-auto flex items-center">
          <Svg s={24} vb={24}><circle cx="11" cy="12" r="10.500" fill="#fff" /><circle cx="11" cy="12" r="9" fill="#1593d8" /><path d="M7.500 9.500q0-3.500 3.500-3.500t3.500 3q0 2-2 3-1.500.8-1.500 2.500M11 16.500v2" stroke="#fff" strokeWidth="2.200" /><circle cx="19" cy="17" r="4.500" fill="#f7a81b" /><path d="M19 14.500v5" stroke="#fff" /></Svg>
          <svg width="26" height="24" viewBox="0 0 26 24" className="ml-[66px]" fill="none">
            <path d="M22 7q4 10-5 14-8 3-13-2 12 2 12-10z" fill="#f59a1c" />
            <path d="M3 9q-3 0-3-3t4-2.500Q5 0 8.500 0T13 5q2 1 1 4z" fill="#a9c6f2" />
            <path d="M14 21q-3 0-3-3t4-2.500q1-3.500 4.500-3T24 16q2 1 1 5z" fill="#c0d6f7" />
            <circle cx="19" cy="6" r="6" fill="#c42b1c" /><path d="M17.500 4.500L19.500 3v6" stroke="#fff" />
          </svg>
          <Fit w={29} className="ml-[7px] text-[14px] leading-none">27°C</Fit>
          <span dir="rtl" className="ml-[9px] w-[54px] text-center font-['DejaVu_Sans',sans-serif] text-[13px] leading-none whitespace-nowrap">غائم جزئيًا</span>
          <svg width="13" height="8" className="ml-[24px]" fill="none"><path d="M1 7l5.500-5.500L12 7" stroke="#fff" strokeWidth="1.300" /></svg>
          <svg width="17" height="14" viewBox="0 0 17 14" className="ml-[9px]" fill="none" stroke="#fff"><path d="M.5 5h2.500l3-3v10L3 9H.5zM8.500 5q1.500 2 0 4M11 3.500q3 3.500 0 7M13.500 1.500q4.500 5.500 0 11" /></svg>
          <svg width="17" height="13" viewBox="0 0 17 13" className="ml-[7px]" fill="none" stroke="#fff"><path d="M4.500 10.500v1h10v-7h-8M14.500 6.500h1v3h-1M1.500 0v3M4.500 0v3M.5 3h5v2l-1.500 2h-2L.5 5zM3 7v4" /><path d="M7 6h6v4H6z" fill="#fff" stroke="none" /></svg>
          <Fit w={23} className="ml-[9px] text-[12px] leading-none">ENG</Fit>
          <div className="ml-[10px] flex h-[40px] w-[57px] flex-col items-center justify-center gap-[4px] text-[12px] leading-[15px]">
            <div className="flex gap-[4px]"><Fit w={26}>11:31</Fit><span dir="rtl" className="font-['DejaVu_Sans',sans-serif] text-[11px]">م</span></div>
            <span dir="ltr" className="font-['DejaVu_Sans',sans-serif] text-[11px] tracking-[-0.5px] whitespace-nowrap [direction:ltr] [unicode-bidi:bidi-override]">٢٠٢٣/٠٨/٣١</span>
          </div>
          <svg width="28" height="26" viewBox="0 0 28 26" className="ml-[13px]" fill="none">
            <path d="M1 2h16v12H7l-3 3v-3H1z" fill="#fff" /><path d="M4 5.500h10M4 8.500h10M4 11.500h6" stroke="#233340" />
            <circle cx="17" cy="17" r="8" fill="#35393d" stroke="#8d949a" />
            <text x="17" y="21" textAnchor="middle" fontSize="12" fontFamily="DejaVu Sans, sans-serif" fill="#fff">٢</text>
          </svg>
          <div className="h-[40px] w-[10px] border-r border-[#6b7781]" /><div className="w-[4px]" />
        </div>
      </div>
    </div>
  );
}
